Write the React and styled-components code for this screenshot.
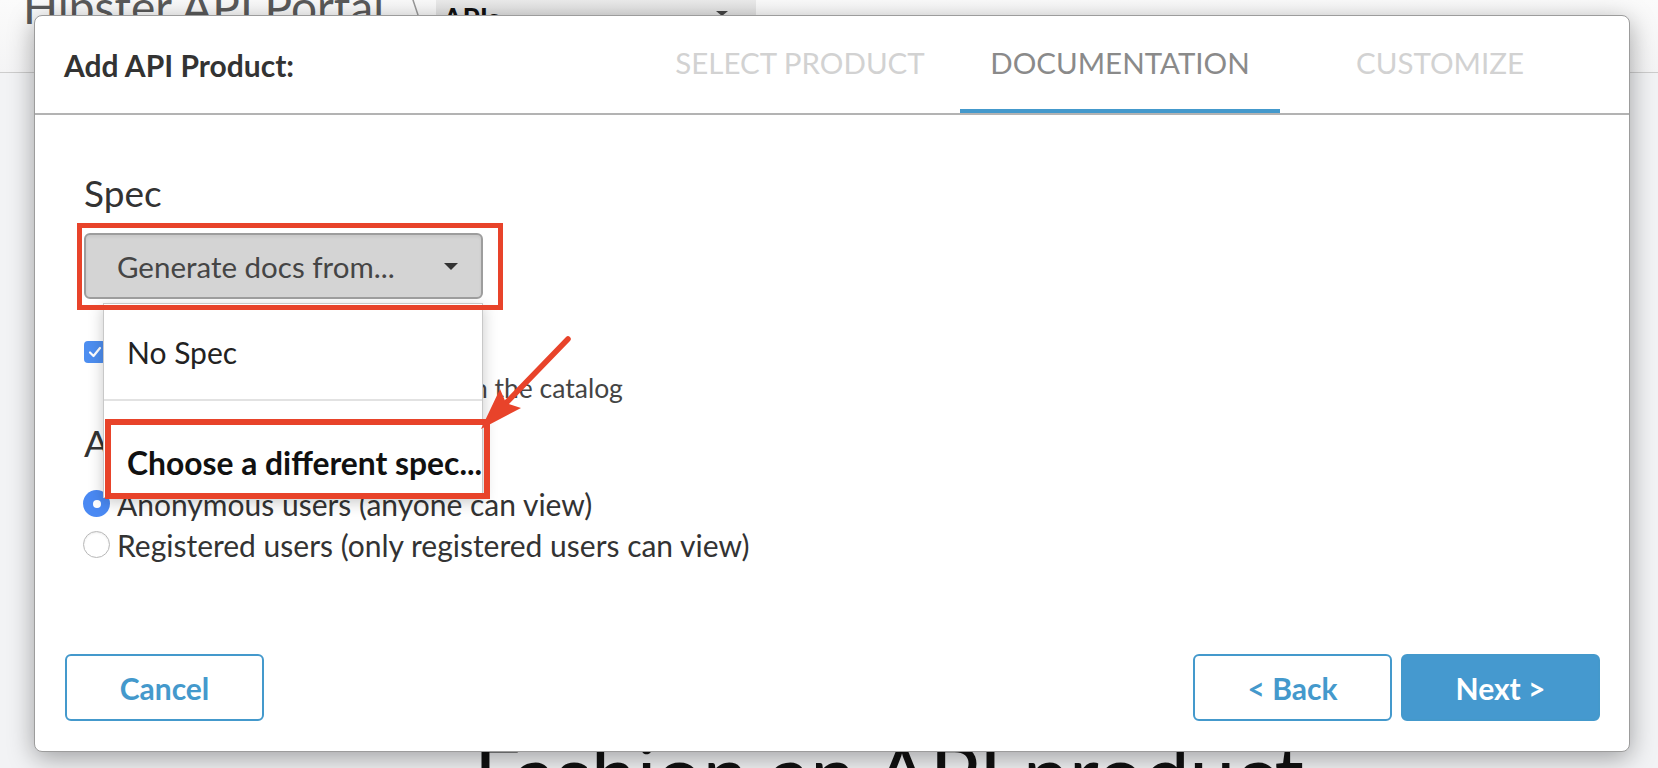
import React from 'react';
import styled, { createGlobalStyle } from 'styled-components';

const GlobalStyle = createGlobalStyle`
  html, body { margin: 0; padding: 0; }
  body { font-family: Lato, "Open Sans", "Liberation Sans", sans-serif; background: #f2f3f5; }
  * { box-sizing: border-box; }
`;

const Page = styled.div`
  position: relative;
  width: 1658px;
  height: 768px;
  overflow: hidden;
  background: #f2f3f5;
`;

const TopBar = styled.div`
  height: 73px;
  display: flex;
  align-items: flex-start;
  padding-left: 23px;
  border-bottom: 1px solid #cdcdcd;
  background: linear-gradient(#fbfbfb, #f4f4f5);
`;

const PortalName = styled.div`
  font-size: 46px;
  line-height: 1;
  color: #5a5a5a;
  margin-top: -16px;
  white-space: nowrap;
`;

const Crumb = styled.svg`
  margin-left: 24px;
  flex: none;
`;

const SectionPicker = styled.div`
  margin-left: 12px;
  width: 320px;
  height: 15px;
  padding: 2px 0 0 7px;
  display: flex;
  justify-content: space-between;
  background: linear-gradient(#ececec, #e2e2e2);
  font-size: 28px;
  font-weight: 700;
  line-height: 1.2;
  color: #111;
  overflow: visible;
`;

const PickerCaret = styled.span`
  margin: 9px 28px 0 0;
  width: 0;
  height: 0;
  border-left: 6px solid transparent;
  border-right: 6px solid transparent;
  border-top: 5px solid #444;
`;

const Main = styled.div`
  padding: 650px 0 0 120px;
  text-align: center;
`;

const PageHeading = styled.h1`
  margin: 0;
  font-size: 82px;
  font-weight: 400;
  color: #111;
  white-space: nowrap;
`;

const Modal = styled.div`
  position: absolute;
  left: 34px;
  top: 15px;
  width: 1596px;
  height: 737px;
  background: #fff;
  border: 1px solid #9c9c9c;
  border-radius: 8px;
  box-shadow: 0 6px 26px rgba(0, 0, 0, 0.35);
  display: flex;
  flex-direction: column;
  z-index: 5;
`;

const ModalHeader = styled.div`
  height: 99px;
  display: flex;
  align-items: center;
  padding: 0 29px;
  border-bottom: 2px solid #b3b3b3;
`;

const ModalTitle = styled.div`
  font-size: 30px;
  font-weight: 700;
  color: #333;
`;

const Tabs = styled.div`
  margin-left: auto;
  display: flex;
  align-self: stretch;
`;

const Tab = styled.div`
  width: 320px;
  display: flex;
  align-items: center;
  justify-content: center;
  border-bottom: 4px solid ${p => (p.$active ? '#4499cc' : 'transparent')};
  font-size: 29.5px;
  text-transform: uppercase;
  color: ${p => (p.$active ? '#8a8a8a' : '#d2d2d2')};
`;

const ModalBody = styled.div`
  flex: 1;
  padding: 58px 50px 0 49px;
  color: #333;
`;

const SectionLabel = styled.div`
  font-size: 37px;
  line-height: 40px;
  color: #333;
  margin-top: ${p => p.$gap || 0}px;
`;

const SpecField = styled.div`
  position: relative;
  width: fit-content;
  margin: 10px 0 0 -7px;
`;

const Highlight = styled.div`
  position: relative;
  z-index: 2;
  display: inline-block;
  border: 5px solid #e8432a;
  padding: 5px 15px 6px 2px;
`;

const Select = styled.div`
  width: 399px;
  height: 66px;
  display: flex;
  align-items: center;
  justify-content: space-between;
  padding: 0 23px 0 31px;
  background: #d4d4d4;
  border: 2px solid #9d9d9d;
  border-radius: 6px;
  box-shadow: inset 0 2px 3px rgba(0, 0, 0, 0.06);
  font-size: 29.5px;
  color: #454545;
  white-space: nowrap;
`;

const Caret = styled.span`
  width: 0;
  height: 0;
  border-left: 7.5px solid transparent;
  border-right: 7.5px solid transparent;
  border-top: 7px solid #333;
`;

const Menu = styled.div`
  position: absolute;
  z-index: 1;
  left: 26px;
  top: 80px;
  width: 380px;
  background: #fff;
  border: 1px solid #c8c8c8;
  box-shadow: 0 4px 14px rgba(0, 0, 0, 0.22);
`;

const MenuItem = styled.div`
  position: relative;
  height: ${p => (p.$action ? 96 : 97)}px;
  display: flex;
  align-items: center;
  padding: ${p => (p.$action ? '28px 0 0 23px' : '0 0 0 23px')};
  font-size: ${p => (p.$action ? 31.8 : 30)}px;
  font-weight: ${p => (p.$action ? 700 : 400)};
  color: ${p => (p.$action ? '#111' : '#222')};
  border-bottom: ${p => (p.$action ? 'none' : '2px solid #e2e2e2')};
  white-space: nowrap;
`;

const ItemHighlight = styled.span`
  position: absolute;
  left: 1px;
  right: -8px;
  top: 18px;
  bottom: -2px;
  border: 6px solid #e8432a;
  pointer-events: none;
`;

const CheckRow = styled.div`
  margin-top: 24px;
  display: flex;
  align-items: center;
  gap: 11px;
  height: 36px;
  font-size: 30px;
  color: #444;
`;

const Checkbox = styled.span`
  width: 22px;
  height: 22px;
  border-radius: 4px;
  background: #4d8ef0;
  display: flex;
  align-items: center;
  justify-content: center;
`;

const HelpText = styled.div`
  padding-left: 39px;
  line-height: 36px;
  font-size: 26.5px;
  color: #444;
  white-space: nowrap;
`;

const RadioList = styled.div`
  margin-top: 20px;
`;

const RadioRow = styled.label`
  display: flex;
  align-items: center;
  gap: 7px;
  height: 41px;
  margin-left: -1px;
  font-size: 30px;
  color: #333;
  white-space: nowrap;
`;

const Radio = styled.span`
  flex: none;
  width: 27px;
  height: 27px;
  border-radius: 50%;
  display: flex;
  align-items: center;
  justify-content: center;
  background: ${p => (p.$checked ? '#4a89f3' : '#fff')};
  border: ${p => (p.$checked ? 'none' : '1.5px solid #b8b8b8')};
  box-shadow: ${p => (p.$checked ? 'none' : 'inset 0 1px 2px rgba(0,0,0,0.08)')};

  &::after {
    content: '';
    width: 8px;
    height: 8px;
    border-radius: 50%;
    background: #fff;
    display: ${p => (p.$checked ? 'block' : 'none')};
  }
`;

const ModalFooter = styled.div`
  display: flex;
  align-items: center;
  padding: 0 29px 30px 30px;
`;

const ButtonGroup = styled.div`
  margin-left: auto;
  display: flex;
  gap: 9px;
`;

const Button = styled.button`
  width: 199px;
  height: 67px;
  border-radius: 6px;
  border: 2px solid #4499cc;
  background: ${p => (p.$primary ? '#4599cf' : '#fff')};
  color: ${p => (p.$primary ? '#fff' : '#4499cc')};
  font-family: Lato, "Open Sans", sans-serif;
  font-size: 30px;
  font-weight: 700;
  cursor: pointer;
`;

const Annotation = styled.svg`
  position: absolute;
  left: 0;
  top: 0;
  z-index: 20;
  pointer-events: none;
`;

export default function App() {
  return (
    <>
      <GlobalStyle />
      <Page>
        <TopBar>
          <PortalName>Hipster API Portal</PortalName>
          <Crumb width="16" height="60" viewBox="0 0 16 60">
            <polyline points="1,-12 14,27 1,66" fill="none" stroke="#9a9a9a" strokeWidth="1.5" />
          </Crumb>
          <SectionPicker>
            <span>APIs</span>
            <PickerCaret />
          </SectionPicker>
        </TopBar>
        <Main>
          <PageHeading>Fashion an API product</PageHeading>
        </Main>

        <Modal>
          <ModalHeader>
            <ModalTitle>Add API Product:</ModalTitle>
            <Tabs>
              <Tab>Select Product</Tab>
              <Tab $active>Documentation</Tab>
              <Tab>Customize</Tab>
            </Tabs>
          </ModalHeader>

          <ModalBody>
            <SectionLabel>Spec</SectionLabel>
            <SpecField>
              <Highlight>
                <Select>
                  <span>Generate docs from...</span>
                  <Caret />
                </Select>
              </Highlight>
              <Menu>
                <MenuItem>No Spec</MenuItem>
                <MenuItem $action>
                  Choose a different spec...
                  <ItemHighlight />
                </MenuItem>
              </Menu>
            </SpecField>

            <CheckRow>
              <Checkbox>
                <svg width="14" height="12" viewBox="0 0 14 12">
                  <polyline points="2,6.5 5.5,10 12,2" fill="none" stroke="#fff" strokeWidth="2.2" strokeLinecap="round" strokeLinejoin="round" />
                </svg>
              </Checkbox>
              <span>Published</span>
            </CheckRow>
            <HelpText>Make this API product visible in the catalog</HelpText>

            <SectionLabel $gap={17}>Audience</SectionLabel>
            <RadioList>
              <RadioRow>
                <Radio $checked />
                Anonymous users (anyone can view)
              </RadioRow>
              <RadioRow>
                <Radio />
                Registered users (only registered users can view)
              </RadioRow>
            </RadioList>
          </ModalBody>

          <ModalFooter>
            <Button>Cancel</Button>
            <ButtonGroup>
              <Button>&lt; Back</Button>
              <Button $primary>Next &gt;</Button>
            </ButtonGroup>
          </ModalFooter>
        </Modal>

        <Annotation width="1658" height="768" viewBox="0 0 1658 768">
          <line x1="568" y1="339" x2="507" y2="402" stroke="#e8432a" strokeWidth="5.5" strokeLinecap="round" />
          <polygon points="481,429 500,389 506,403 521,408" fill="#e8432a" />
        </Annotation>
      </Page>
    </>
  );
}
